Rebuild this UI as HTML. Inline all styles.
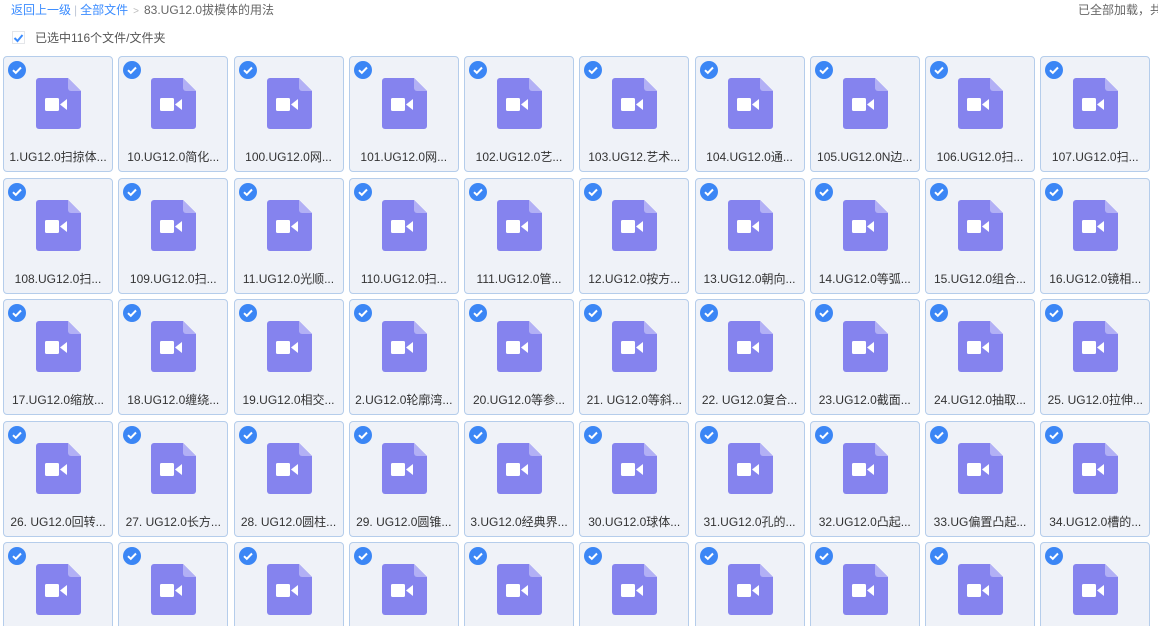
<!DOCTYPE html>
<html><head><meta charset="utf-8"><style>
*{margin:0;padding:0;box-sizing:border-box}
html,body{width:1158px;height:626px;overflow:hidden}
body{background:#fff;font-family:"Liberation Sans","Noto Sans CJK SC",sans-serif;font-size:12px;color:#333;position:relative}
.crumb{position:absolute;left:11px;top:1px;font-size:12px;color:#666;white-space:nowrap}
.crumb a{color:#3b8cff;text-decoration:none}
.crumb .sep{color:#c0c8d8;margin:0 3px}
.crumb .gt{color:#bbb;margin:0 5px;font-size:10px}
.right{position:absolute;left:1078px;top:1px;color:#666;white-space:nowrap}
.sel{position:absolute;left:12px;top:29px;color:#555;white-space:nowrap}
.sel svg{position:absolute;left:0;top:2px}
.sel span{margin-left:23px}
.grid{position:absolute;left:3px;top:56px;display:grid;grid-template-columns:repeat(10,110px);column-gap:5.25px;row-gap:5.6px;grid-auto-rows:116px}
.c{position:relative;background:#eff2f8;border:1px solid #b5cdeb;border-radius:4px}
.ck{position:absolute;left:4px;top:4px}
.ic{position:absolute;left:32px;top:21px}
.t{position:absolute;left:0;right:0;top:91px;text-align:center;white-space:nowrap;font-size:12px;color:#333}
</style></head><body>
<div class="crumb"><a>返回上一级</a><span class="sep">|</span><a>全部文件</a><span class="gt">&gt;</span>83.UG12.0拔模体的用法</div>
<div class="right">已全部加载，共</div>
<div class="sel"><svg width="13" height="13" viewBox="0 0 13 13"><rect x="0.5" y="0.5" width="12" height="12" fill="#fff" stroke="#e4e6ea"/><path d="M2.5 7l3 3 5-6" fill="none" stroke="#3b8cff" stroke-width="2"/></svg><span>已选中116个文件/文件夹</span></div>
<svg width="0" height="0" style="position:absolute"><defs>
<symbol id="ck" viewBox="0 0 18 18"><circle cx="9" cy="9" r="9" fill="#3b86f5"/><path d="M5 9.2l2.8 2.6L13 6.5" fill="none" stroke="#fff" stroke-width="2"/></symbol>
<symbol id="fi" viewBox="0 0 45 51"><path d="M3 0h29l13 13v35a3 3 0 0 1-3 3H3a3 3 0 0 1-3-3V3a3 3 0 0 1 3-3z" fill="#8583ee"/><path d="M32 0l13 13H35a3 3 0 0 1-3-3z" fill="#b2b0f5"/><rect x="9" y="20" width="14" height="13" rx="1.5" fill="#fff"/><path d="M24 26.5l7-5.5v11z" fill="#fff"/></symbol>
</defs></svg>
<div class="grid">
<div class="c"><svg class="ck" width="18" height="18"><use href="#ck"/></svg><svg class="ic" width="45" height="51"><use href="#fi"/></svg><div class="t">1.UG12.0扫掠体...</div></div>
<div class="c"><svg class="ck" width="18" height="18"><use href="#ck"/></svg><svg class="ic" width="45" height="51"><use href="#fi"/></svg><div class="t">10.UG12.0简化...</div></div>
<div class="c"><svg class="ck" width="18" height="18"><use href="#ck"/></svg><svg class="ic" width="45" height="51"><use href="#fi"/></svg><div class="t">100.UG12.0网...</div></div>
<div class="c"><svg class="ck" width="18" height="18"><use href="#ck"/></svg><svg class="ic" width="45" height="51"><use href="#fi"/></svg><div class="t">101.UG12.0网...</div></div>
<div class="c"><svg class="ck" width="18" height="18"><use href="#ck"/></svg><svg class="ic" width="45" height="51"><use href="#fi"/></svg><div class="t">102.UG12.0艺...</div></div>
<div class="c"><svg class="ck" width="18" height="18"><use href="#ck"/></svg><svg class="ic" width="45" height="51"><use href="#fi"/></svg><div class="t">103.UG12.艺术...</div></div>
<div class="c"><svg class="ck" width="18" height="18"><use href="#ck"/></svg><svg class="ic" width="45" height="51"><use href="#fi"/></svg><div class="t">104.UG12.0通...</div></div>
<div class="c"><svg class="ck" width="18" height="18"><use href="#ck"/></svg><svg class="ic" width="45" height="51"><use href="#fi"/></svg><div class="t">105.UG12.0N边...</div></div>
<div class="c"><svg class="ck" width="18" height="18"><use href="#ck"/></svg><svg class="ic" width="45" height="51"><use href="#fi"/></svg><div class="t">106.UG12.0扫...</div></div>
<div class="c"><svg class="ck" width="18" height="18"><use href="#ck"/></svg><svg class="ic" width="45" height="51"><use href="#fi"/></svg><div class="t">107.UG12.0扫...</div></div>
<div class="c"><svg class="ck" width="18" height="18"><use href="#ck"/></svg><svg class="ic" width="45" height="51"><use href="#fi"/></svg><div class="t">108.UG12.0扫...</div></div>
<div class="c"><svg class="ck" width="18" height="18"><use href="#ck"/></svg><svg class="ic" width="45" height="51"><use href="#fi"/></svg><div class="t">109.UG12.0扫...</div></div>
<div class="c"><svg class="ck" width="18" height="18"><use href="#ck"/></svg><svg class="ic" width="45" height="51"><use href="#fi"/></svg><div class="t">11.UG12.0光顺...</div></div>
<div class="c"><svg class="ck" width="18" height="18"><use href="#ck"/></svg><svg class="ic" width="45" height="51"><use href="#fi"/></svg><div class="t">110.UG12.0扫...</div></div>
<div class="c"><svg class="ck" width="18" height="18"><use href="#ck"/></svg><svg class="ic" width="45" height="51"><use href="#fi"/></svg><div class="t">111.UG12.0管...</div></div>
<div class="c"><svg class="ck" width="18" height="18"><use href="#ck"/></svg><svg class="ic" width="45" height="51"><use href="#fi"/></svg><div class="t">12.UG12.0按方...</div></div>
<div class="c"><svg class="ck" width="18" height="18"><use href="#ck"/></svg><svg class="ic" width="45" height="51"><use href="#fi"/></svg><div class="t">13.UG12.0朝向...</div></div>
<div class="c"><svg class="ck" width="18" height="18"><use href="#ck"/></svg><svg class="ic" width="45" height="51"><use href="#fi"/></svg><div class="t">14.UG12.0等弧...</div></div>
<div class="c"><svg class="ck" width="18" height="18"><use href="#ck"/></svg><svg class="ic" width="45" height="51"><use href="#fi"/></svg><div class="t">15.UG12.0组合...</div></div>
<div class="c"><svg class="ck" width="18" height="18"><use href="#ck"/></svg><svg class="ic" width="45" height="51"><use href="#fi"/></svg><div class="t">16.UG12.0镜相...</div></div>
<div class="c"><svg class="ck" width="18" height="18"><use href="#ck"/></svg><svg class="ic" width="45" height="51"><use href="#fi"/></svg><div class="t">17.UG12.0缩放...</div></div>
<div class="c"><svg class="ck" width="18" height="18"><use href="#ck"/></svg><svg class="ic" width="45" height="51"><use href="#fi"/></svg><div class="t">18.UG12.0缠绕...</div></div>
<div class="c"><svg class="ck" width="18" height="18"><use href="#ck"/></svg><svg class="ic" width="45" height="51"><use href="#fi"/></svg><div class="t">19.UG12.0相交...</div></div>
<div class="c"><svg class="ck" width="18" height="18"><use href="#ck"/></svg><svg class="ic" width="45" height="51"><use href="#fi"/></svg><div class="t">2.UG12.0轮廓湾...</div></div>
<div class="c"><svg class="ck" width="18" height="18"><use href="#ck"/></svg><svg class="ic" width="45" height="51"><use href="#fi"/></svg><div class="t">20.UG12.0等参...</div></div>
<div class="c"><svg class="ck" width="18" height="18"><use href="#ck"/></svg><svg class="ic" width="45" height="51"><use href="#fi"/></svg><div class="t">21. UG12.0等斜...</div></div>
<div class="c"><svg class="ck" width="18" height="18"><use href="#ck"/></svg><svg class="ic" width="45" height="51"><use href="#fi"/></svg><div class="t">22. UG12.0复合...</div></div>
<div class="c"><svg class="ck" width="18" height="18"><use href="#ck"/></svg><svg class="ic" width="45" height="51"><use href="#fi"/></svg><div class="t">23.UG12.0截面...</div></div>
<div class="c"><svg class="ck" width="18" height="18"><use href="#ck"/></svg><svg class="ic" width="45" height="51"><use href="#fi"/></svg><div class="t">24.UG12.0抽取...</div></div>
<div class="c"><svg class="ck" width="18" height="18"><use href="#ck"/></svg><svg class="ic" width="45" height="51"><use href="#fi"/></svg><div class="t">25. UG12.0拉伸...</div></div>
<div class="c"><svg class="ck" width="18" height="18"><use href="#ck"/></svg><svg class="ic" width="45" height="51"><use href="#fi"/></svg><div class="t">26. UG12.0回转...</div></div>
<div class="c"><svg class="ck" width="18" height="18"><use href="#ck"/></svg><svg class="ic" width="45" height="51"><use href="#fi"/></svg><div class="t">27. UG12.0长方...</div></div>
<div class="c"><svg class="ck" width="18" height="18"><use href="#ck"/></svg><svg class="ic" width="45" height="51"><use href="#fi"/></svg><div class="t">28. UG12.0圆柱...</div></div>
<div class="c"><svg class="ck" width="18" height="18"><use href="#ck"/></svg><svg class="ic" width="45" height="51"><use href="#fi"/></svg><div class="t">29. UG12.0圆锥...</div></div>
<div class="c"><svg class="ck" width="18" height="18"><use href="#ck"/></svg><svg class="ic" width="45" height="51"><use href="#fi"/></svg><div class="t">3.UG12.0经典界...</div></div>
<div class="c"><svg class="ck" width="18" height="18"><use href="#ck"/></svg><svg class="ic" width="45" height="51"><use href="#fi"/></svg><div class="t">30.UG12.0球体...</div></div>
<div class="c"><svg class="ck" width="18" height="18"><use href="#ck"/></svg><svg class="ic" width="45" height="51"><use href="#fi"/></svg><div class="t">31.UG12.0孔的...</div></div>
<div class="c"><svg class="ck" width="18" height="18"><use href="#ck"/></svg><svg class="ic" width="45" height="51"><use href="#fi"/></svg><div class="t">32.UG12.0凸起...</div></div>
<div class="c"><svg class="ck" width="18" height="18"><use href="#ck"/></svg><svg class="ic" width="45" height="51"><use href="#fi"/></svg><div class="t">33.UG偏置凸起...</div></div>
<div class="c"><svg class="ck" width="18" height="18"><use href="#ck"/></svg><svg class="ic" width="45" height="51"><use href="#fi"/></svg><div class="t">34.UG12.0槽的...</div></div>
<div class="c"><svg class="ck" width="18" height="18"><use href="#ck"/></svg><svg class="ic" width="45" height="51"><use href="#fi"/></svg></div>
<div class="c"><svg class="ck" width="18" height="18"><use href="#ck"/></svg><svg class="ic" width="45" height="51"><use href="#fi"/></svg></div>
<div class="c"><svg class="ck" width="18" height="18"><use href="#ck"/></svg><svg class="ic" width="45" height="51"><use href="#fi"/></svg></div>
<div class="c"><svg class="ck" width="18" height="18"><use href="#ck"/></svg><svg class="ic" width="45" height="51"><use href="#fi"/></svg></div>
<div class="c"><svg class="ck" width="18" height="18"><use href="#ck"/></svg><svg class="ic" width="45" height="51"><use href="#fi"/></svg></div>
<div class="c"><svg class="ck" width="18" height="18"><use href="#ck"/></svg><svg class="ic" width="45" height="51"><use href="#fi"/></svg></div>
<div class="c"><svg class="ck" width="18" height="18"><use href="#ck"/></svg><svg class="ic" width="45" height="51"><use href="#fi"/></svg></div>
<div class="c"><svg class="ck" width="18" height="18"><use href="#ck"/></svg><svg class="ic" width="45" height="51"><use href="#fi"/></svg></div>
<div class="c"><svg class="ck" width="18" height="18"><use href="#ck"/></svg><svg class="ic" width="45" height="51"><use href="#fi"/></svg></div>
<div class="c"><svg class="ck" width="18" height="18"><use href="#ck"/></svg><svg class="ic" width="45" height="51"><use href="#fi"/></svg></div>
</div>
</body></html>
